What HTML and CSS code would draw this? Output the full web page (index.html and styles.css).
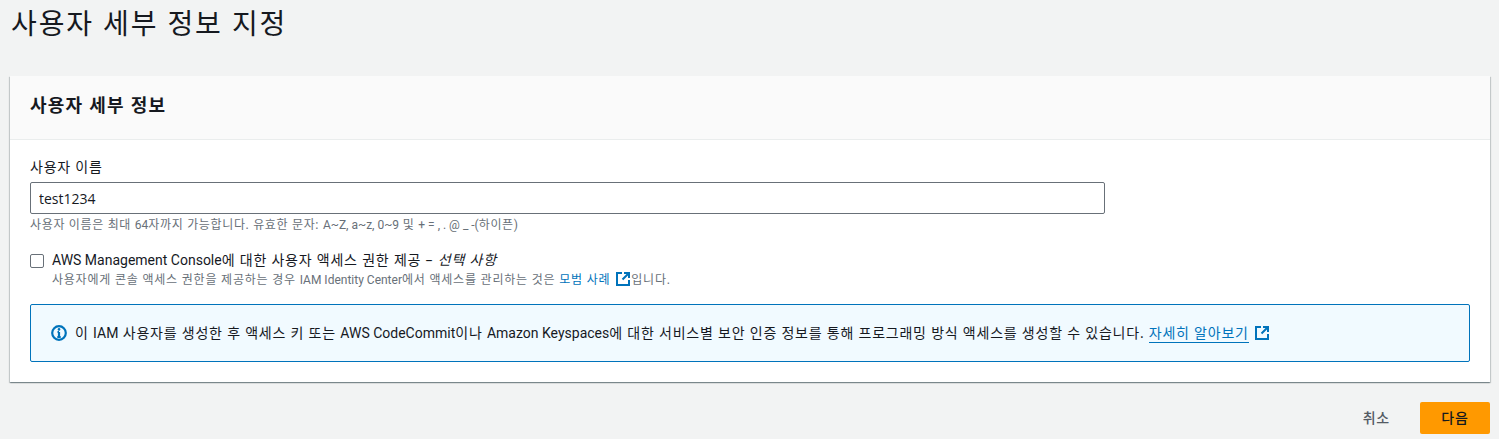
FILE: index.html
```html
<!DOCTYPE html>
<html lang="ko">
<head>
<meta charset="utf-8">
<title>사용자 세부 정보 지정</title>
<link rel="stylesheet" href="styles.css">
</head>
<body>
<main class="page">
  <h1 class="title">사용자 세부 정보 지정</h1>
  <section class="panel">
    <header class="panel-head"><h2>사용자 세부 정보</h2></header>
    <div class="panel-body">
      <div class="field">
        <label class="label" for="user">사용자 이름</label>
        <input class="input" id="user" type="text" value="test1234">
        <p class="hint">사용자 이름은 최대 <span class="en">64</span>자까지 가능합니다. 유효한 문자: <span class="en">A~Z, a~z, 0~9</span> 및 <span class="en">+ = , . @ _ -(</span>하이픈<span class="en">)</span></p>
      </div>
      <div class="check-row">
        <span class="checkbox"></span>
        <div class="check-text">
          <div class="check-label"><span class="en">AWS Management Console</span>에 대한 사용자 액세스 권한 제공 – <i>선택 사항</i></div>
          <div class="check-hint">사용자에게 콘솔 액세스 권한을 제공하는 경우 <span class="en">IAM Identity Center</span>에서 액세스를 관리하는 것은 <a class="link" href="#">모범 사례</a>
            <svg class="ext" viewBox="0 0 16 16"><path d="M7 2H2v12h12V9" /><path d="M9 2h5v5M14 2 7.5 8.5" /></svg>입니다.</div>
        </div>
      </div>
      <div class="alert">
        <svg class="info" viewBox="0 0 16 16"><circle cx="8" cy="8" r="6.8" /><path d="M8 7v5M6.3 12h3.4M6.5 7H8" /><circle class="dot" cx="8" cy="4.4" r="1.3" /></svg>
        <p class="alert-text">이 <span class="en">IAM</span> 사용자를 생성한 후 액세스 키 또는 <span class="en">AWS CodeCommit</span>이나 <span class="en">Amazon Keyspaces</span>에 대한 서비스별 보안 인증 정보를 통해 프로그래밍 방식 액세스를 생성할 수 있습니다. <a class="link underlined" href="#">자세히 알아보기</a>
          <svg class="ext" viewBox="0 0 16 16"><path d="M7 2H2v12h12V9" /><path d="M9 2h5v5M14 2 7.5 8.5" /></svg></p>
      </div>
    </div>
  </section>
  <footer class="actions">
    <button class="btn-text" type="button">취소</button>
    <button class="btn-primary" type="button">다음</button>
  </footer>
</main>
</body>
</html>
```
FILE: styles.css
```css
* { box-sizing: border-box; }
html, body { margin: 0; padding: 0; }
body {
  background: #f2f3f3;
  color: #16191f;
  font-family: "Open Sans", "Noto Sans CJK KR", sans-serif;
  font-size: 14px;
  line-height: 20px;
  letter-spacing: .055em;
  overflow: hidden;
}
.en { font-family: Roboto, sans-serif; letter-spacing: 0; }
.page { padding: 0 9px 0 10px; }
.title {
  margin: 0;
  height: 76px;
  padding: 5px 0 0 1px;
  font-size: 28px;
  line-height: 36px;
  font-weight: 400;
  letter-spacing: .067em;
}
.panel {
  background: #fff;
  height: 306px;
  box-shadow: 0 1px 1px 0 rgba(0, 28, 36, .3), 1px 1px 1px 0 rgba(0, 28, 36, .15), -1px 1px 1px 0 rgba(0, 28, 36, .15);
}
.panel-head {
  height: 64px;
  padding: 17px 20px 0;
  background: #fafafa;
  border-bottom: 1px solid #eaeded;
}
.panel-head h2 { margin: 0; font-size: 18px; line-height: 24px; font-weight: 700; letter-spacing: .068em; }
.panel-body { padding: 16px 20px 20px; }
.label { display: block; line-height: 22px; height: 26px; }
.input {
  display: block;
  width: 1075px;
  height: 32px;
  padding: 0 8px;
  border: 1px solid #687078;
  border-radius: 2px;
  background: #fff;
  color: #16191f;
  font: inherit;
  letter-spacing: 0;
  outline: none;
}
.hint {
  margin: 2px 0 0;
  font-size: 12px;
  line-height: 18px;
  color: #687078;
  letter-spacing: .054em;
}
.check-row { display: flex; gap: 8px; margin-top: 16px; }
.checkbox {
  flex: none;
  width: 14px;
  height: 14px;
  margin: 4px 0 0;
  background: #fff;
  border: 1px solid #687078;
  border-radius: 2px;
}
.check-label { line-height: 20px; }
.check-hint { font-size: 12px; line-height: 18px; color: #687078; margin-top: 1px; }
.link { color: #0073bb; text-decoration: none; }
.underlined { border-bottom: 1px solid #0073bb; }
.ext {
  display: inline-block;
  width: 16px;
  height: 16px;
  margin-left: 1px;
  vertical-align: -3px;
  fill: none;
  stroke: #0073bb;
  stroke-width: 2;
}
.alert {
  display: flex;
  align-items: center;
  gap: 8px;
  margin-top: 15px;
  width: 1440px;
  height: 58px;
  padding: 0 19px 0 20px;
  background: #f1faff;
  border: 1px solid #0073bb;
  border-radius: 2px;
}
.alert-text { margin: 0; white-space: nowrap; }
.info {
  flex: none;
  width: 16px;
  height: 16px;
  fill: none;
  stroke: #0073bb;
  stroke-width: 2.2;
}
.info .dot { fill: #0073bb; stroke: none; }
.actions { display: flex; justify-content: flex-end; align-items: center; gap: 30px; margin-top: 20px; }
.btn-text {
  padding: 0;
  border: 0;
  background: none;
  color: #545b64;
  font: inherit;
  letter-spacing: .055em;
  font-weight: 500;
}
.btn-primary {
  width: 70px;
  height: 32px;
  border: 0;
  border-radius: 2px;
  background: #ff9900;
  color: #16191f;
  font: inherit;
  letter-spacing: .055em;
  font-weight: 500;
}
```
